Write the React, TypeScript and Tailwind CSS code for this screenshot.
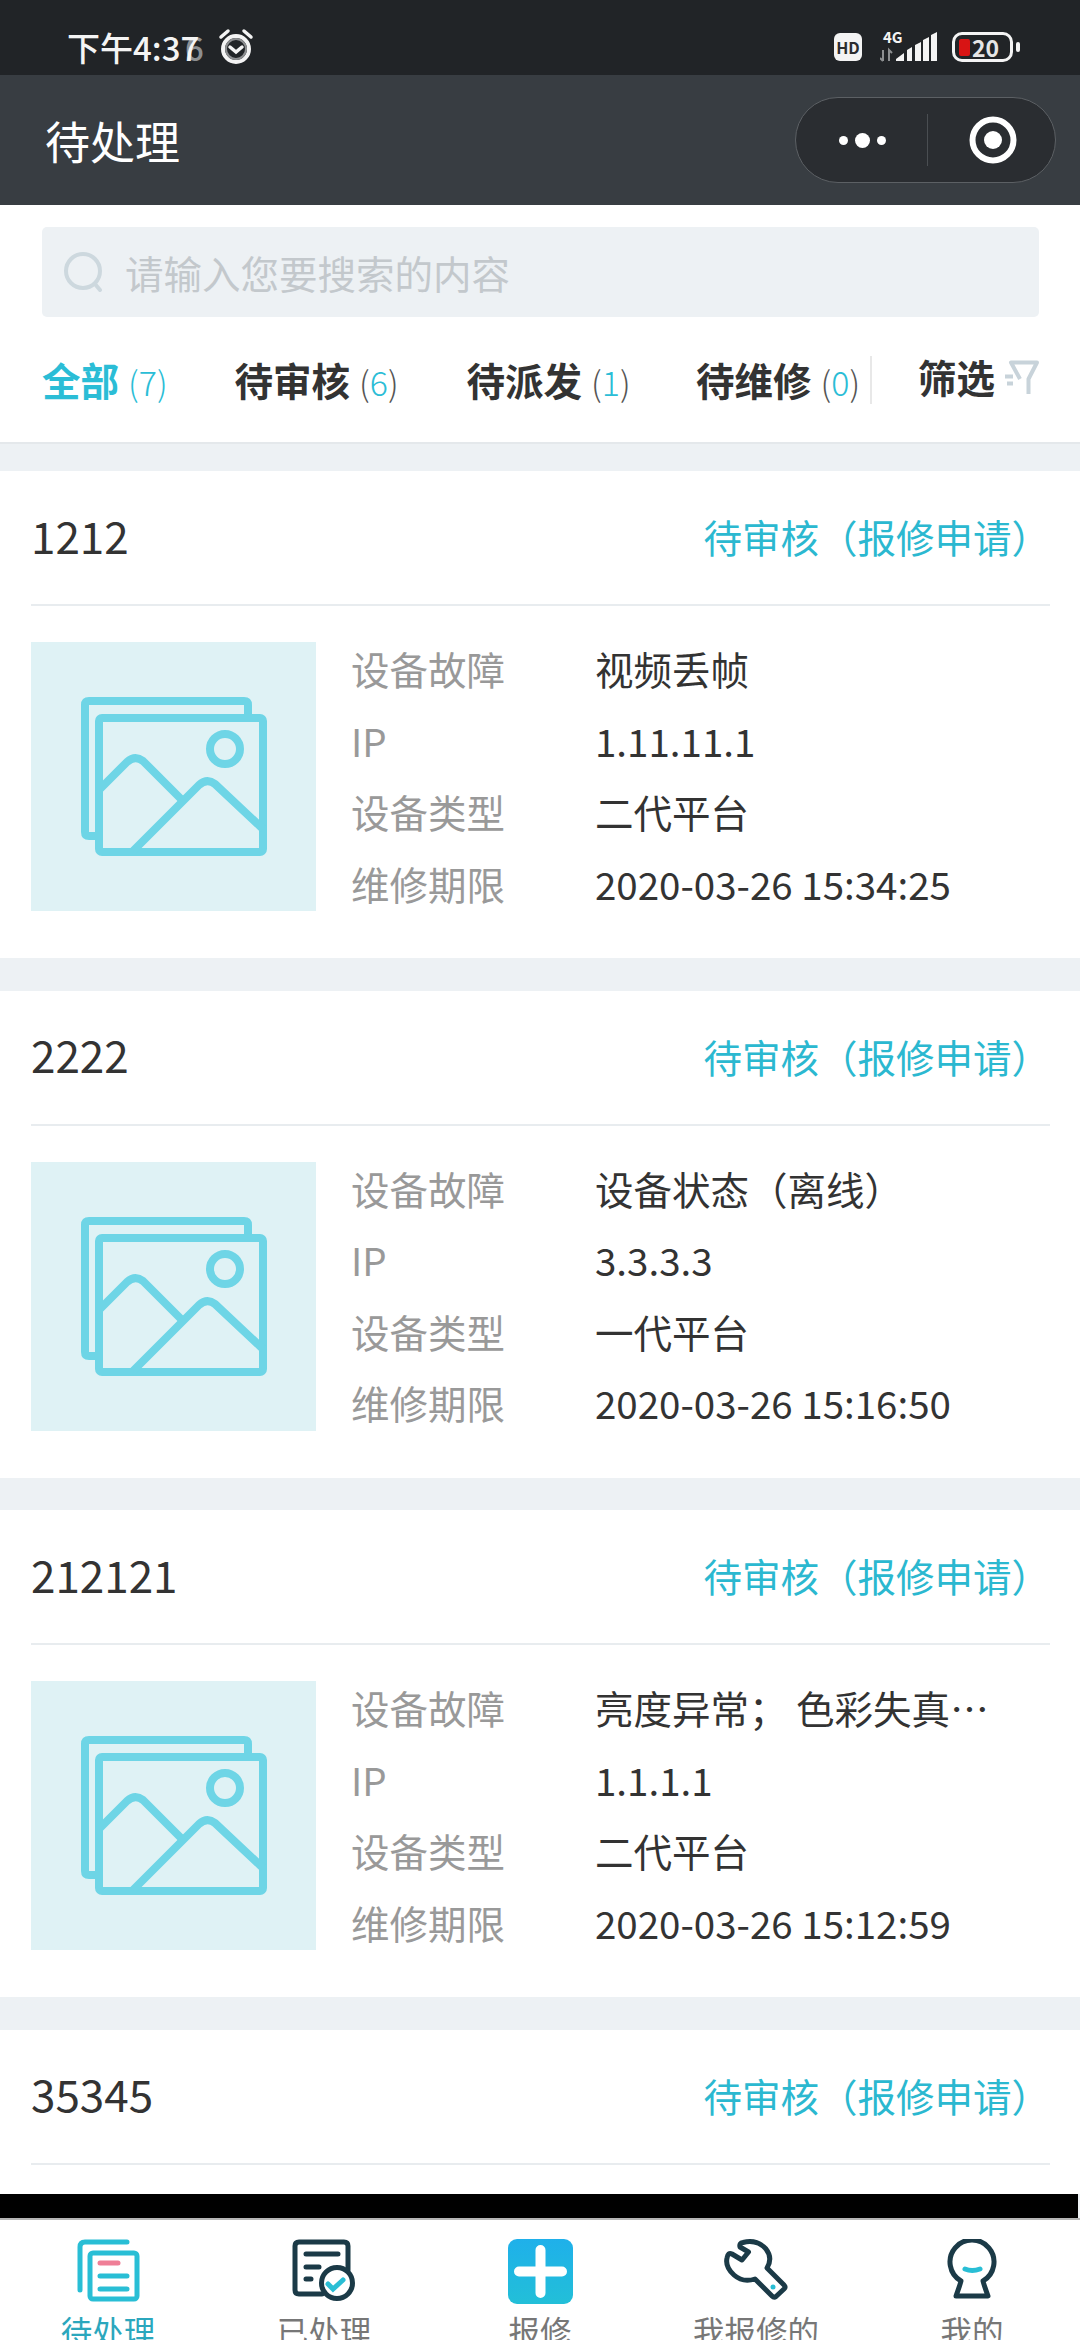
const font = { fontFamily: '"Noto Sans CJK SC", "Noto Sans", sans-serif' };

const tabs = [
  { label: "全部", count: 7, width: "w-[192.5px]", active: true },
  { label: "待审核", count: 6, width: "w-[232px]", active: false },
  { label: "待派发", count: 1, width: "w-[229.5px]", active: false },
  { label: "待维修", count: 0, width: "w-[177px]", active: false },
];

const orders = [
  { id: "1212", fault: "视频丢帧", ip: "1.11.11.1", type: "二代平台", deadline: "2020-03-26 15:34:25" },
  { id: "2222", fault: "设备状态（离线）", ip: "3.3.3.3", type: "一代平台", deadline: "2020-03-26 15:16:50" },
  { id: "212121", fault: "亮度异常； 色彩失真； 花屏闪烁", ip: "1.1.1.1", type: "二代平台", deadline: "2020-03-26 15:12:59" },
];

function StatusBar() {
  return (
    <div className="flex h-[75px] shrink-0 items-center bg-[#212427] pl-[67px] pr-[60px] pt-[19px] text-[#f4f4f4]">
      <div className="relative text-[33px] leading-none font-medium">
        <span className="absolute left-[118px] top-0 text-[#8d8f91]">6</span>
        <span className="relative">下午4:37</span>
      </div>
      <svg className="ml-[19px] -mt-[3px] h-[36px] w-[38px]" viewBox="0 0 38 36" fill="none" stroke="currentColor" strokeLinecap="round">
        <circle cx="18" cy="21" r="13" strokeWidth="4" />
        <circle cx="18" cy="21" r="10" strokeWidth="2" stroke="#8d8f91" />
        <path d="M12 19l6 5 6-5" strokeWidth="3.5" />
        <path d="M3 9l7-6M33 9l-7-6" strokeWidth="3.5" />
      </svg>
      <div className="ml-auto flex items-center">
        <div className="flex h-[28px] w-[28px] items-center justify-center rounded-[6px] bg-[#f3f3f3] text-[16px] leading-none font-bold text-[#2a2c2e]">
          HD
        </div>
        <div className="relative ml-[18px] h-[32px] w-[58px]">
          <span className="absolute left-[3px] top-[-1px] text-[15px] leading-[14px] font-bold">4G</span>
          <svg className="h-[32px] w-[58px]" viewBox="0 0 58 32" fill="#f4f4f4">
            <path d="M3 19v11M0 27l3 3M9 30V19l3 3" stroke="#8d8f91" strokeWidth="2" fill="none" />
            <path d="M16 30v-2l8-6v8zM27 30V19l5-3v14zM35 30V14l6-3v19zM43 30V9l6-3v24zM51 30V4l6-3v29z" />
          </svg>
        </div>
        <div className="ml-[14px] flex h-[30px] w-[61px] items-center rounded-[10px] border-[3px] border-[#f4f4f4] pl-[4px]">
          <span className="h-[17px] w-[11px] rounded-[2px] bg-[#d81414]" />
          <span className="ml-[2px] text-[23px] leading-none font-bold text-[#e6e6e6]">20</span>
        </div>
        <span className="ml-[3px] h-[10px] w-[4px] rounded-[2px] bg-[#f4f4f4]" />
      </div>
    </div>
  );
}

function NavBar() {
  return (
    <div className="flex h-[130px] shrink-0 items-center bg-[#383d42] pl-[45px] pr-[24px]">
      <span className="text-[45px] leading-none text-white">待处理</span>
      <div className="ml-auto flex h-[86px] w-[261px] items-center rounded-[43px] border border-[#5c6064] bg-[#2a2d31]">
        <div className="flex w-[131px] items-center justify-center gap-[7px] pl-[2px]">
          <span className="h-[9px] w-[9px] rounded-full bg-white" />
          <span className="h-[15px] w-[15px] rounded-full bg-white" />
          <span className="h-[9px] w-[9px] rounded-full bg-white" />
        </div>
        <span className="h-[52px] w-px bg-[#4a4e52]" />
        <div className="flex flex-1 items-center justify-center pl-[2px]">
          <svg className="h-[48px] w-[48px]" viewBox="0 0 48 48">
            <circle cx="24" cy="24" r="20.5" fill="none" stroke="#fff" strokeWidth="6" />
            <circle cx="24" cy="24" r="9" fill="#fff" />
          </svg>
        </div>
      </div>
    </div>
  );
}

function SearchBox() {
  return (
    <div className="ml-[42px] mr-[41px] flex h-[90px] items-center rounded-[5px] bg-[#edf1f4] pl-[21px]">
      <svg className="h-[40px] w-[42px]" viewBox="0 0 42 40" fill="none" stroke="#cdd8de" strokeWidth="4">
        <circle cx="20" cy="19" r="17" />
        <path d="M32 32l5 6" strokeLinecap="round" />
      </svg>
      <span className="ml-[20px] text-[38.5px] leading-none text-[#c3c8cc]">请输入您要搜索的内容</span>
    </div>
  );
}

function Tabs() {
  return (
    <div className="flex h-[127px] items-center border-b-2 border-[#e4e8eb] pl-[42px]">
      {tabs.map((tab) => (
        <div key={tab.label} className={`flex items-baseline ${tab.width}`}>
          <span className={`text-[38.5px] leading-none font-bold ${tab.active ? "text-[#2bbdd6]" : "text-[#333]"}`}>{tab.label}</span>
          <span className={`ml-[9px] text-[34px] leading-none font-light ${tab.active ? "text-[#2bbdd6]" : "text-[#555]"}`}>
            (<span className="text-[#2bbdd6]">{tab.count}</span>)
          </span>
        </div>
      ))}
      <span className="-ml-[3px] h-[48px] w-[2px] bg-[#e8e8e8]" />
      <span className="ml-[46px] -mt-[6px] text-[38.5px] leading-none font-bold text-[#333]">筛选</span>
      <svg className="ml-[10px] -mt-[6px] h-[36px] w-[34px]" viewBox="0 0 34 36" fill="none" stroke="#c8d3da" strokeWidth="4" strokeLinejoin="round">
        <path d="M15 20L6 3.5H32L23.5 20V35" />
        <path d="M0 17.5h8M2 24.5h6" />
      </svg>
    </div>
  );
}

function Placeholder() {
  return (
    <div className="h-[269px] w-[285px] shrink-0 bg-[#dff2f5]">
      <svg className="h-full w-full" viewBox="0 0 285 269" fill="none" stroke="#6ed5e6" strokeWidth="8" strokeLinejoin="round">
        <path d="M68 194H58q-4 0-4-4V63q0-4 4-4h155q4 0 4 4v13" />
        <rect x="68" y="76" width="164" height="134" rx="3" />
        <circle cx="194" cy="107" r="15" />
        <path d="M68 148l28-28q8-7 16-1l38 38" />
        <path d="M102 209l66-66q8-7 16-1l48 45" />
      </svg>
    </div>
  );
}

function Row({ label, value }: { label: string; value: string }) {
  return (
    <div className="flex h-[71.6px] items-center text-[38.5px] leading-[1.6]">
      <span className="w-[244px] shrink-0 text-[#999]">{label}</span>
      <span className="w-[396px] truncate text-[#333]">{value}</span>
    </div>
  );
}

function OrderHead({ id }: { id: string }) {
  return (
    <div className="flex h-[135px] items-center justify-between border-b-2 border-[#e8ecef]">
      <span className="-mt-[6px] text-[44px] leading-none text-[#333]">{id}</span>
      <span className="pb-[2px] text-[38.5px] leading-none text-[#2bb8d0]">待审核（报修申请）</span>
    </div>
  );
}

function OrderCard({ order }: { order: (typeof orders)[number] }) {
  return (
    <div className="mb-[32.5px] bg-white pl-[31px] pr-[30px]">
      <OrderHead id={order.id} />
      <div className="flex pb-[47px] pt-[36px]">
        <Placeholder />
        <div className="-mb-[9px] -mt-[9px] ml-[35px]">
          <Row label="设备故障" value={order.fault} />
          <Row label="IP" value={order.ip} />
          <Row label="设备类型" value={order.type} />
          <Row label="维修期限" value={order.deadline} />
        </div>
      </div>
    </div>
  );
}

function PendingIcon() {
  return (
    <svg className="h-[64px] w-[64px]" viewBox="0 0 64 64" fill="none" stroke="#29bed5" strokeWidth="5" strokeLinecap="round">
      <path d="M4 51V8q0-5 5-5h42" />
      <rect x="14" y="14" width="47" height="46" rx="3" strokeLinejoin="round" />
      <path d="M24 24h18" stroke="#ef7f97" />
      <path d="M24 37h27M24 50h27" />
    </svg>
  );
}

function DoneIcon() {
  return (
    <svg className="h-[64px] w-[64px]" viewBox="0 0 64 64" fill="none" stroke="#1b3a47" strokeWidth="5" strokeLinecap="round">
      <path d="M30 55H7q-4 0-4-4V7q0-4 4-4h45q4 0 4 4v24" />
      <path d="M14 15h32M14 28h13M14 40h5" />
      <circle cx="45" cy="44" r="15.5" fill="#fff" />
      <path d="M36 45l5 5 10-9" stroke="#29bed5" />
    </svg>
  );
}

function AddIcon() {
  return (
    <svg className="h-[65px] w-[65px]" viewBox="0 0 65 65">
      <defs>
        <linearGradient id="add" x1="0" y1="0" x2="0" y2="1">
          <stop offset="0" stopColor="#1fb0ea" />
          <stop offset="1" stopColor="#22bfd8" />
        </linearGradient>
      </defs>
      <rect width="65" height="65" rx="9" fill="url(#add)" />
      <path d="M32.5 11v43M11 32.5h43" stroke="#fff" strokeWidth="10" strokeLinecap="round" />
    </svg>
  );
}

function WrenchIcon() {
  return (
    <svg className="h-[64px] w-[64px]" viewBox="0 0 64 64" fill="none" stroke="#1b3a47" strokeWidth="5" strokeLinejoin="round">
      <path d="M16 8Q15 4 19 3.5Q33 0 42 10Q49 19 43 29L60 46Q62 48 60 50L52 57.5Q50 59 48 57L31 40Q19 44 10 36Q1 28 3 19Q4 13 8 15L18 21L24.5 13Z" />
      <circle cx="49" cy="48" r="2.5" fill="#29bed5" stroke="none" />
    </svg>
  );
}

function MineIcon() {
  return (
    <svg className="h-[64px] w-[64px]" viewBox="0 0 64 64" fill="none" stroke="#1b3a47" strokeWidth="5" strokeLinejoin="round">
      <path d="M21 42A22 22 0 1 1 43 42q1 4 5 15H16q4-11 5-15z" />
      <path d="M25 30q7 3 15 0" stroke="#29bed5" strokeLinecap="round" />
    </svg>
  );
}

const navItems = [
  { label: "待处理", icon: <PendingIcon />, active: true },
  { label: "已处理", icon: <DoneIcon />, active: false },
  { label: "报修", icon: <AddIcon />, active: false },
  { label: "我报修的", icon: <WrenchIcon />, active: false },
  { label: "我的", icon: <MineIcon />, active: false },
];

function BottomNav() {
  return (
    <div className="h-[122px] shrink-0 border-t-2 border-[#b5b5b5] bg-white">
      <div className="grid grid-cols-5 pt-[19px]">
        {navItems.map((item) => (
          <div key={item.label} className="flex flex-col items-center">
            <div className="flex h-[64px] items-center">{item.icon}</div>
            <span className={`mt-[12px] text-[31.5px] leading-none ${item.active ? "text-[#2ba7bd]" : "text-[#777]"}`}>{item.label}</span>
          </div>
        ))}
      </div>
    </div>
  );
}

export default function App() {
  return (
    <div className="flex h-[2340px] w-[1080px] flex-col overflow-hidden bg-[#edf1f4]" style={font}>
      <StatusBar />
      <NavBar />
      <div className="shrink-0 bg-white pt-[22px]">
        <SearchBox />
        <Tabs />
      </div>
      <div className="flex flex-1 flex-col pt-[27px]">
        {orders.map((order) => (
          <OrderCard key={order.id} order={order} />
        ))}
        <div className="flex-1 bg-white pl-[31px] pr-[30px]">
          <OrderHead id="35345" />
        </div>
      </div>
      <div className="mr-[2px] h-[24px] shrink-0 bg-black" />
      <BottomNav />
    </div>
  );
}
